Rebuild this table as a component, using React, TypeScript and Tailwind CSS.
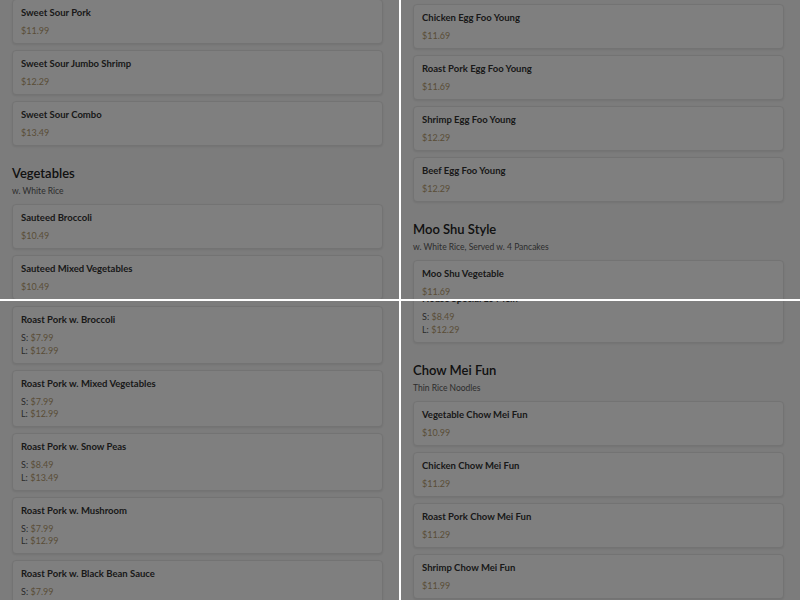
type Price = { label?: string; value: string };
type Item = { name: string; prices: Price[] };
type Block =
  | { kind: "section"; title: string; note: string }
  | { kind: "item"; item: Item };

const one = (name: string, value: string): Block => ({
  kind: "item",
  item: { name, prices: [{ value }] },
});

const two = (name: string, s: string, l: string): Block => ({
  kind: "item",
  item: {
    name,
    prices: [
      { label: "S:", value: s },
      { label: "L:", value: l },
    ],
  },
});

const section = (title: string, note: string): Block => ({ kind: "section", title, note });

// four views of the same long menu, each at its own scroll position
const panels: { offset: string; blocks: Block[] }[] = [
  {
    offset: "mt-[-1px]",
    blocks: [
      one("Sweet Sour Pork", "$11.99"),
      one("Sweet Sour Jumbo Shrimp", "$12.29"),
      one("Sweet Sour Combo", "$13.49"),
      section("Vegetables", "w. White Rice"),
      one("Sauteed Broccoli", "$10.49"),
      one("Sauteed Mixed Vegetables", "$10.49"),
    ],
  },
  {
    offset: "mt-[4px]",
    blocks: [
      one("Chicken Egg Foo Young", "$11.69"),
      one("Roast Pork Egg Foo Young", "$11.69"),
      one("Shrimp Egg Foo Young", "$12.29"),
      one("Beef Egg Foo Young", "$12.29"),
      section("Moo Shu Style", "w. White Rice, Served w. 4 Pancakes"),
      one("Moo Shu Vegetable", "$11.69"),
    ],
  },
  {
    offset: "mt-[5px]",
    blocks: [
      two("Roast Pork w. Broccoli", "$7.99", "$12.99"),
      two("Roast Pork w. Mixed Vegetables", "$7.99", "$12.99"),
      two("Roast Pork w. Snow Peas", "$8.49", "$13.49"),
      two("Roast Pork w. Mushroom", "$7.99", "$12.99"),
      two("Roast Pork w. Black Bean Sauce", "$7.99", "$12.99"),
    ],
  },
  {
    offset: "mt-[-16px]",
    blocks: [
      two("House Special Lo Mein", "$8.49", "$12.29"),
      section("Chow Mei Fun", "Thin Rice Noodles"),
      one("Vegetable Chow Mei Fun", "$10.99"),
      one("Chicken Chow Mei Fun", "$11.29"),
      one("Roast Pork Chow Mei Fun", "$11.29"),
      one("Shrimp Chow Mei Fun", "$11.99"),
    ],
  },
];

function MenuCard({ item }: { item: Item }) {
  return (
    <div className="rounded-[4px] border border-[#e6e6e6] bg-white px-2 pt-[6px] pb-[5.5px] shadow-[0_1px_2px_rgba(0,0,0,0.08)]">
      <p className="text-[9.5px] leading-[14px] font-bold text-[#333]">{item.name}</p>
      <div className="mt-[5px]">
        {item.prices.map((p) => (
          <p key={p.value + p.label} className="text-[9px] leading-[12.5px]">
            {p.label && <span className="text-[#555]">{p.label} </span>}
            <span className="text-[#b59c70]">{p.value}</span>
          </p>
        ))}
      </div>
    </div>
  );
}

function Panel({ offset, blocks }: { offset: string; blocks: Block[] }) {
  return (
    <div className="relative overflow-hidden bg-[#f8f8f8]">
      <div className={`flex flex-col gap-[6px] pl-3 pr-4 ${offset}`}>
        {blocks.map((b, i) =>
          b.kind === "section" ? (
            <div key={i} className="mt-[12px] mb-[1px]">
              <h2 className="text-[13px] leading-[18px] font-semibold text-[#222]">{b.title}</h2>
              <p className="mt-[3px] text-[8.5px] leading-[12px] text-[#5a5a5a]">{b.note}</p>
            </div>
          ) : (
            <MenuCard key={i} item={b.item} />
          )
        )}
      </div>
      <div className="absolute inset-0 bg-black/50" />
    </div>
  );
}

export default function App() {
  return (
    <div
      className="grid h-[600px] w-[800px] grid-cols-[399px_399px] grid-rows-[299px_299px] gap-[2px] bg-white"
      style={{ fontFamily: "Lato, 'Open Sans', sans-serif" }}
    >
      {panels.map((p, i) => (
        <Panel key={i} offset={p.offset} blocks={p.blocks} />
      ))}
    </div>
  );
}
